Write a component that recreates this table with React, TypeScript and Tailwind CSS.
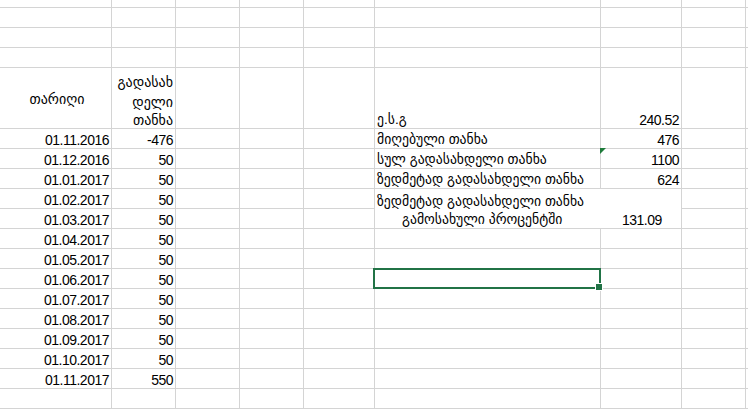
import React from "react";

type Cell = {
  text?: React.ReactNode;
  align?: "left" | "right" | "center";
};

const COLS = 9;
const ROWS = 20;

const dates = [
  ["01.11.2016", "-476"],
  ["01.12.2016", "50"],
  ["01.01.2017", "50"],
  ["01.02.2017", "50"],
  ["01.03.2017", "50"],
  ["01.04.2017", "50"],
  ["01.05.2017", "50"],
  ["01.06.2017", "50"],
  ["01.07.2017", "50"],
  ["01.08.2017", "50"],
  ["01.09.2017", "50"],
  ["01.10.2017", "50"],
  ["01.11.2017", "550"],
];

// key = "row:col"
const cells: Record<string, Cell> = {};
dates.forEach(([d, v], i) => {
  cells[`${i + 5}:0`] = { text: d, align: "right" };
  cells[`${i + 5}:1`] = { text: v, align: "right" };
});
cells["4:5"] = { text: "ე.ს.გ", align: "left" };
cells["4:6"] = { text: "240.52", align: "right" };
cells["5:5"] = { text: "მიღებული თანხა", align: "left" };
cells["5:6"] = { text: "476", align: "right" };
cells["6:5"] = { text: "სულ გადასახდელი თანხა", align: "left" };
cells["6:6"] = { text: "1100", align: "right" };
cells["7:5"] = { text: "ზედმეტად გადასახდელი თანხა", align: "left" };
cells["7:6"] = { text: "624", align: "right" };

function isSkipped(r: number, c: number) {
  // merged block F9:G10 is rendered once at 8:5
  if ((r === 8 || r === 9) && (c === 5 || c === 6)) return !(r === 8 && c === 5);
  return false;
}

export default function App() {
  const items: React.ReactNode[] = [];

  for (let r = 0; r < ROWS; r++) {
    for (let c = 0; c < COLS; c++) {
      if (isSkipped(r, c)) continue;
      const key = `${r}:${c}`;

      if (r === 4 && c === 0) {
        items.push(
          <div key={key} className="bg-white flex items-center justify-center pl-[3px] pt-[1px]">
            <span className="leading-4 text-[14px]">თარიღი</span>
          </div>
        );
        continue;
      }
      if (r === 4 && c === 1) {
        items.push(
          <div key={key} className="bg-white flex flex-col items-end justify-end pr-[2px] text-[14px] leading-[20px]">
            <span>გადასახ</span>
            <span>დელი</span>
            <span className="leading-4">თანხა</span>
          </div>
        );
        continue;
      }
      if (r === 8 && c === 5) {
        items.push(
          <div key={key} className="bg-white col-span-2 row-span-2 flex flex-col justify-end text-[13.7px]">
            <span className="pl-[2px] leading-[20px] whitespace-nowrap">ზედმეტად გადასახდელი თანხა</span>
            <div className="flex leading-4 whitespace-nowrap">
              <span className="w-[247px] pl-[27px]">გამოსახული პროცენტში</span>
              <span className="text-[14px] tracking-[-0.5px]">131.09</span>
            </div>
          </div>
        );
        continue;
      }

      const cell = cells[key];
      const selected = r === 12 && c === 5;
      const flagged = r === 6 && c === 6;
      const isNum = cell && /^[-\d.]+$/.test(String(cell.text));

      items.push(
        <div
          key={key}
          className={`bg-white relative flex items-end whitespace-nowrap ${
            cell?.align === "right" ? "justify-end pr-[2px]" : "justify-start pl-[2px]"
          }`}
        >
          {cell && (
            <span
              className={`leading-4 ${isNum ? "text-[14px] tracking-[-0.5px]" : "text-[13.7px]"}`}
            >
              {cell.text}
            </span>
          )}
          {flagged && (
            <div className="absolute -left-px -top-px w-0 h-0 border-t-[6px] border-r-[6px] border-t-[#1e7b3a] border-r-transparent" />
          )}
          {selected && (
            <div className="absolute -left-[2px] -top-px -right-px -bottom-px border-2 border-[#217346] z-10">
              <div className="absolute -right-[4px] -bottom-[4px] w-[6px] h-[6px] bg-[#217346] border border-white box-content" />
            </div>
          )}
        </div>
      );
    }
  }

  return (
    <div
      className="w-[748px] h-[409px] overflow-hidden bg-white text-black"
      style={{ fontFamily: '"Liberation Sans", "DejaVu Sans", sans-serif' }}
    >
      <div className="grid gap-px bg-[#d4d4d4] grid-cols-[111px_63px_63px_63px_70px_225px_80px_63px_40px] grid-rows-[7px_19px_19px_19px_60px_repeat(15,19px)]">
        {items}
      </div>
    </div>
  );
}
